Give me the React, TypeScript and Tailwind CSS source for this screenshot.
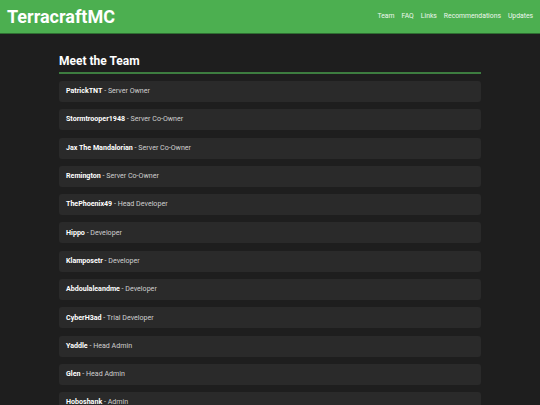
import React from 'react';

const team = [
  { name: 'PatrickTNT', role: 'Server Owner' },
  { name: 'Stormtrooper1948', role: 'Server Co-Owner' },
  { name: 'Jax The Mandalorian', role: 'Server Co-Owner' },
  { name: 'Remington', role: 'Server Co-Owner' },
  { name: 'ThePhoenix49', role: 'Head Developer' },
  { name: 'Hippo', role: 'Developer' },
  { name: 'Klamposetr', role: 'Developer' },
  { name: 'Abdoulaleandme', role: 'Developer' },
  { name: 'CyberH3ad', role: 'Trial Developer' },
  { name: 'Yaddle', role: 'Head Admin' },
  { name: 'Glen', role: 'Head Admin' },
  { name: 'Hoboshank', role: 'Admin' },
];

const links = ['Team', 'FAQ', 'Links', 'Recommendations', 'Updates'];

export default function App() {
  return (
    <div className="min-h-screen bg-[#1e1e1e] text-white font-['Roboto',sans-serif]">
      <header className="h-[34px] bg-[#4caf50] border-b border-[#2f6e32] flex items-center justify-between px-[7px]">
        <h1 className="text-[18px] font-bold leading-none">TerracraftMC</h1>
        <nav className="flex gap-[7px] text-[6.8px] text-[#eef7ee]">
          {links.map(l => (
            <a key={l} href="#">{l}</a>
          ))}
        </nav>
      </header>

      <main className="max-w-[422px] mx-auto pt-[21px] pb-6">
        <h2 className="text-[12px] font-bold leading-none pb-[5px] border-b-2 border-[#3d7d40]">Meet the Team</h2>
        <div className="mt-[7px] flex flex-col gap-[7.3px]">
          {team.map(m => (
            <div key={m.name} className="h-[21px] bg-[#2a2a2a] rounded-[3px] px-[7px] flex items-center text-[7.1px]">
              <span className="font-bold text-white">{m.name}</span>
              <span className="text-[#cfcfcf]">&nbsp;- {m.role}</span>
            </div>
          ))}
        </div>
      </main>
    </div>
  );
}
